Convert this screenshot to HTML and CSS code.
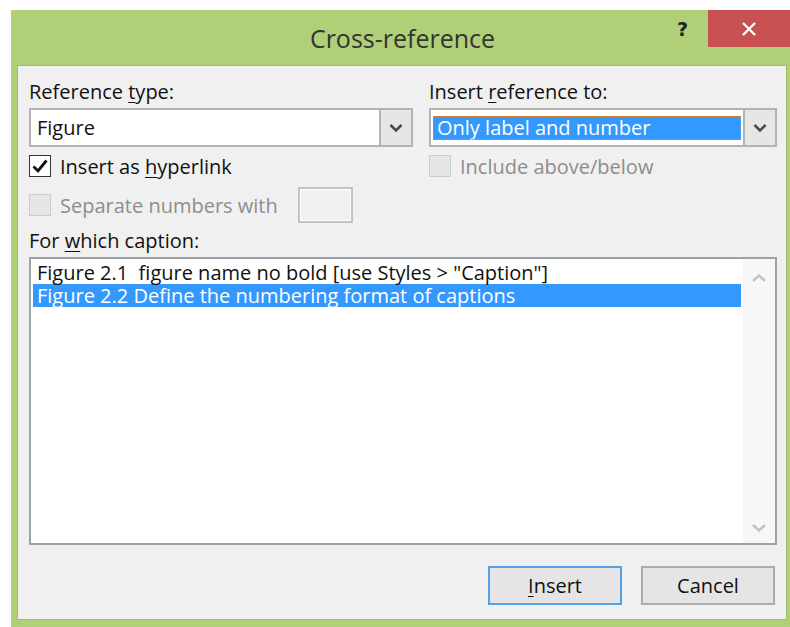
FILE: index.html
```html
<!DOCTYPE html>
<html lang="en">
<head>
<meta charset="utf-8">
<title>Cross-reference</title>
<link rel="stylesheet" href="styles.css">
</head>
<body>
<div class="window">
  <div class="titlebar">
    <div class="title">Cross-reference</div>
    <div class="controls">
      <span class="help">?</span>
      <span class="close">
        <svg width="16" height="16" viewBox="0 0 16 16"><path d="M2 2 L14 14 M14 2 L2 14" stroke="#fff" stroke-width="2.4" fill="none"/></svg>
      </span>
    </div>
  </div>
  <div class="panel">
    <div class="top-grid">
      <div class="col">
        <div class="label">Reference <u>t</u>ype:</div>
        <div class="combo">
          <div class="combo-value">Figure</div>
          <div class="combo-btn"><svg width="14" height="10" viewBox="0 0 14 10"><path d="M1.5 2 L7 7.5 L12.5 2" stroke="#4a4a4a" stroke-width="2.6" fill="none"/></svg></div>
        </div>
        <div class="check-row">
          <span class="box checked"><svg width="18" height="16" viewBox="0 0 18 16"><path d="M2.5 8.5 L7 13 L15.5 2.5" stroke="#111" stroke-width="2.8" fill="none"/></svg></span>
          <span class="check-text">Insert as <u>h</u>yperlink</span>
        </div>
        <div class="check-row sep-row">
          <span class="box disabled"></span>
          <span class="check-text dim">Separate numbers with</span>
          <span class="small-input"></span>
        </div>
      </div>
      <div class="col">
        <div class="label">Insert <u>r</u>eference to:</div>
        <div class="combo">
          <div class="combo-value"><span class="combo-sel">Only label and number</span></div>
          <div class="combo-btn"><svg width="14" height="10" viewBox="0 0 14 10"><path d="M1.5 2 L7 7.5 L12.5 2" stroke="#4a4a4a" stroke-width="2.6" fill="none"/></svg></div>
        </div>
        <div class="check-row">
          <span class="box disabled"></span>
          <span class="check-text dim">Include above/below</span>
        </div>
      </div>
    </div>
    <div class="label caption-label">For <u>w</u>hich caption:</div>
    <div class="listbox">
      <div class="items">
        <div class="item">Figure 2.1&nbsp; figure name no bold [use Styles &gt; "Caption"]</div>
        <div class="item selected">Figure 2.2 Define the numbering format of captions</div>
      </div>
      <div class="scrollbar">
        <svg width="16" height="10" viewBox="0 0 16 10"><path d="M2 8 L8 2.5 L14 8" stroke="#c4c4c4" stroke-width="2.4" fill="none"/></svg>
        <svg width="16" height="10" viewBox="0 0 16 10"><path d="M2 2 L8 7.5 L14 2" stroke="#c4c4c4" stroke-width="2.4" fill="none"/></svg>
      </div>
    </div>
    <div class="buttons">
      <button class="btn default"><u>I</u>nsert</button>
      <button class="btn">Cancel</button>
    </div>
  </div>
</div>
</body>
</html>
```

FILE: styles.css
```css
html, body {
  margin: 0;
  padding: 0;
  background: #ffffff;
}

body {
  font-family: "Open Sans", "Noto Sans", sans-serif;
  color: #111111;
}

u {
  text-decoration-thickness: 1px;
  text-underline-offset: 3px;
}

.window {
  margin: 10px 0 0 11px;
  width: 779px;
  height: 617px;
  background: #afd076;
  display: flex;
  flex-direction: column;
}

/* title bar */
.titlebar {
  height: 55px;
  position: relative;
  flex: none;
}

.title {
  text-align: center;
  font-size: 25px;
  line-height: 56px;
  color: #333333;
  padding-left: 4px;
}

.controls {
  position: absolute;
  top: 0;
  right: 0;
  display: flex;
  align-items: flex-start;
}

.help {
  font-family: "DejaVu Sans", sans-serif;
  font-weight: bold;
  font-size: 19px;
  color: #222;
  margin-top: 8px;
  margin-right: 20px;
}

.close {
  width: 82px;
  height: 37px;
  background: #c75050;
  display: flex;
  align-items: center;
  justify-content: center;
}

/* dialog body */
.panel {
  flex: 1;
  margin: 0 3px 7px 6px;
  background: #f0f0f0;
  border: 1px solid #9fbf69;
  padding: 14px 9px 0 11px;
  font-size: 20px;
}

.top-grid {
  display: grid;
  grid-template-columns: 384px 348px;
  column-gap: 16px;
}

.label {
  line-height: 24px;
  height: 24px;
  margin-bottom: 4px;
  white-space: nowrap;
}

.combo {
  height: 39px;
  box-sizing: border-box;
  border: 2px solid #b3b3b3;
  background: #ffffff;
  display: flex;
}

.combo-value {
  flex: 1;
  padding: 3px 2px;
  display: flex;
  align-items: center;
  line-height: 25px;
  padding-left: 6px;
}

.combo-sel {
  display: block;
  width: 100%;
  margin-left: -4px;
  padding-left: 4px;
  background: #3399ff;
  color: #ffffff;
  outline: 1px dotted #e08a2c;
  outline-offset: -1px;
  line-height: 24px;
}

.combo-btn {
  width: 30px;
  border-left: 2px solid #b3b3b3;
  background: #e6e6e6;
  display: flex;
  align-items: center;
  justify-content: center;
}

.check-row {
  display: flex;
  align-items: center;
  height: 22px;
  margin-top: 8px;
  white-space: nowrap;
}

.sep-row {
  height: 36px;
  margin-top: 10px;
}

.box {
  width: 22px;
  height: 22px;
  box-sizing: border-box;
  display: flex;
  align-items: center;
  justify-content: center;
  flex: none;
  margin-right: 9px;
}

.box.checked {
  border: 1px solid #333333;
  background: #ffffff;
}

.box.disabled {
  border: 1px solid #cccccc;
  background: #e6e6e6;
}

.check-text.dim {
  color: #8d8d8d;
}

.small-input {
  width: 55px;
  height: 36px;
  box-sizing: border-box;
  border: 2px solid #c2c2c2;
  background: #f0f0f0;
  box-shadow: inset 0 0 0 1px #ffffff;
  margin-left: 20px;
}

.caption-label {
  margin-top: 6px;
}

/* caption list */
.listbox {
  height: 288px;
  box-sizing: border-box;
  border: 2px solid #9ea1a8;
  background: #ffffff;
  display: flex;
}

.items {
  flex: 1;
  padding: 2px 2px 0 2px;
}

.item {
  height: 23px;
  line-height: 23px;
  padding-left: 4px;
  white-space: nowrap;
}

.item.selected {
  background: #3399ff;
  color: #ffffff;
}

.scrollbar {
  width: 32px;
  background: #f7f7f7;
  display: flex;
  flex-direction: column;
  align-items: center;
  justify-content: space-between;
  padding: 14px 0 10px;
  box-sizing: border-box;
}

/* action buttons */
.buttons {
  display: flex;
  justify-content: flex-end;
  gap: 19px;
  margin-top: 21px;
  padding-right: 2px;
}

.btn {
  width: 134px;
  height: 39px;
  box-sizing: border-box;
  font-family: inherit;
  font-size: 20px;
  color: #111111;
  background: #e5e5e5;
  border: 2px solid #adadad;
  padding: 0;
}

.btn.default {
  border: 2px solid #56a0e8;
}
```
